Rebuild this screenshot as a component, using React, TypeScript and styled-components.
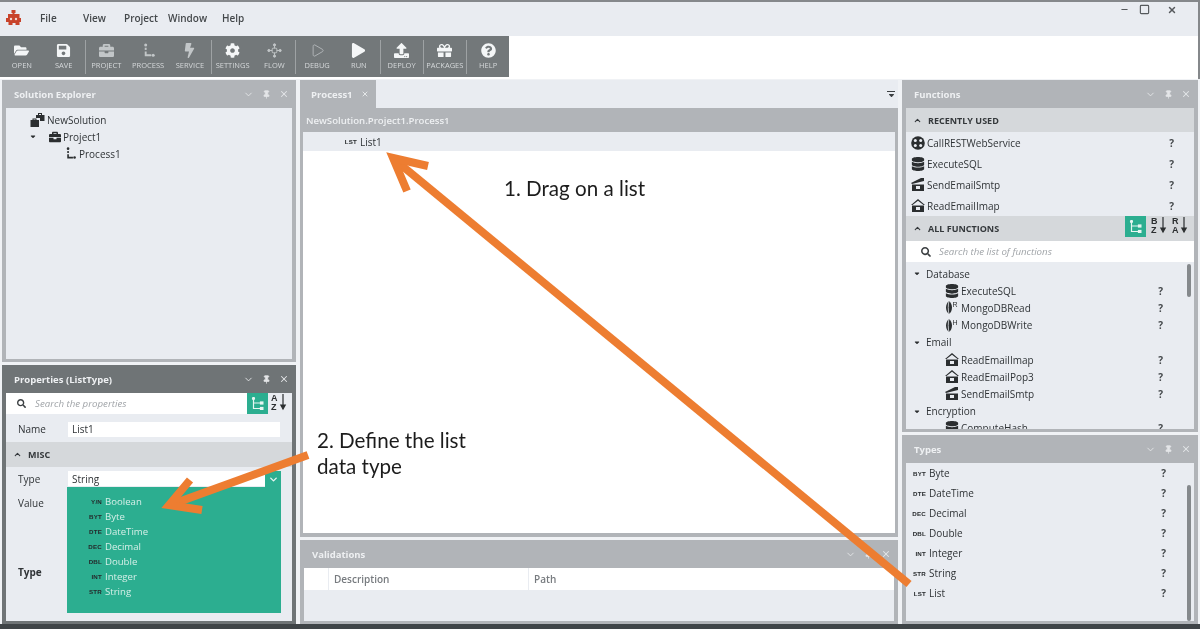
import { Fragment, ReactNode } from "react";
import styled, { createGlobalStyle } from "styled-components";
import { ChevronDown, ChevronUp, Minus, Pin, Play, Square, X } from "lucide-react";
import {
  FaBolt,
  FaBriefcase,
  FaCog,
  FaDatabase,
  FaFolderOpen,
  FaGift,
  FaPlay,
  FaQuestionCircle,
  FaSave,
  FaSearch,
  FaSortDown,
  FaUpload,
} from "react-icons/fa";

const GlobalStyle = createGlobalStyle`
  html, body {
    margin: 0;
    padding: 0;
    background: #ffffff;
    overflow: hidden;
  }
  * { box-sizing: border-box; }
`;

const Shell = styled.div`
  position: relative;
  width: 1200px;
  height: 629px;
  display: flex;
  flex-direction: column;
  overflow: hidden;
  background: #e9ecf1;
  border-top: 2px solid #85888b;
  font-family: "Open Sans", "Noto Sans", sans-serif;
  font-size: 10px;
  color: #2f3336;
  filter: blur(0.3px);
`;

const TitleBar = styled.div`
  height: 34px;
  flex: none;
  display: flex;
  align-items: center;
  padding: 0 0 2px 6px;
  background: #e9ecf1;
  border-right: 2px solid #85888b;
`;

const Logo = styled.svg`
  width: 15px;
  height: 16px;
  margin-right: 19px;
`;

const MenuItem = styled.span<{ $w: number }>`
  width: ${(p) => p.$w}px;
  font-weight: 600;
  font-size: 10px;
  color: #44484b;
`;

const WindowButtons = styled.div`
  margin-left: auto;
  margin-right: 21px;
  align-self: flex-start;
  margin-top: 2px;
  display: flex;
  align-items: center;
  color: #55595c;
  gap: 10px;
`;

const CloseGlyph = styled(X)`
  margin-left: 7px;
`;

const ToolRow = styled.div`
  height: 43px;
  flex: none;
  background: #ffffff;
  border-right: 2px solid #85888b;
`;

const Toolbar = styled.div`
  width: 509px;
  height: 41px;
  padding-left: 1px;
  display: flex;
  background: #73787a;
`;

const ToolSep = styled.div`
  width: 1px;
  margin: 4px 0 3px;
  background: #9ea2a4;
`;

const ToolButton = styled.div<{ $w?: number; $dim?: boolean }>`
  width: ${(p) => p.$w ?? 42}px;
  display: flex;
  flex-direction: column;
  align-items: center;
  padding-top: 7px;
  gap: 3px;
  color: ${(p) => (p.$dim ? "#c2c6c8" : "#f4f6f7")};
  svg {
    height: 15px;
    width: 15px;
    display: block;
  }
`;

const ToolLabel = styled.span`
  font-size: 7.5px;
  line-height: 9px;
  color: #d5d8da;
  white-space: nowrap;
`;

const Workspace = styled.div`
  flex: 1;
  min-height: 0;
  padding: 1px 2px 0;
  display: grid;
  grid-template-columns: 294px 598px 296px;
  gap: 4px;
  background: #f0f2f5;
`;

const Column = styled.div`
  display: flex;
  flex-direction: column;
  gap: 3px;
  min-height: 0;
`;

const Frame = styled.section<{ $h?: number; $dark?: boolean }>`
  ${(p) => (p.$h ? `height: ${p.$h}px; flex: none;` : "flex: 1; min-height: 0;")}
  display: flex;
  flex-direction: column;
  background: ${(p) => (p.$dark ? "#6f7476" : "#b1b4b8")};
  padding: 0 4px 3px;
`;

const FrameHead = styled.header`
  height: 28px;
  flex: none;
  display: flex;
  align-items: center;
  padding: 0 3px 0 8px;
  color: #eef0f2;
  font-weight: 700;
  font-size: 9.5px;
`;

const FrameControls = styled.div`
  margin-left: auto;
  display: flex;
  align-items: center;
  gap: 8px;
  color: #e4e6e8;
`;

const FrameBody = styled.div`
  flex: 1;
  min-height: 0;
  position: relative;
  overflow: hidden;
  background: #e9ecf1;
`;

const TreeList = styled.div`
  padding-top: 3px;
`;

const TreeRow = styled.div<{ $indent: number; $h?: number; $right?: number }>`
  height: ${(p) => p.$h ?? 17.2}px;
  padding-left: ${(p) => p.$indent}px;
  padding-right: ${(p) => p.$right ?? 31}px;
  display: flex;
  align-items: center;
  gap: 2px;
  font-size: 10px;
  white-space: nowrap;
  svg {
    flex: none;
    color: #2b2e30;
  }
`;

const Caret = styled(FaSortDown)`
  width: 8px;
  height: 8px;
  margin: -3px 3px 0 0;
`;

const ProjectCaret = styled(Caret)`
  margin-right: 10px;
`;

const Help = styled.span`
  margin-left: auto;
  font-weight: 700;
  color: #44484b;
`;

const Band = styled.div<{ $h?: number }>`
  height: ${(p) => p.$h ?? 25}px;
  flex: none;
  display: flex;
  align-items: center;
  padding-left: 7px;
  gap: 6px;
  background: #d5d8db;
  font-weight: 700;
  font-size: 9px;
  color: #34383b;
`;

const SearchRow = styled.div<{ $pad: number }>`
  height: 21px;
  display: flex;
  align-items: center;
  gap: 8px;
  padding-left: ${(p) => p.$pad}px;
  background: #ffffff;
  font-style: italic;
  font-size: 9.7px;
  color: #a0a4a8;
  svg {
    color: #3c4043;
  }
`;

const TogglePill = styled.div`
  width: 21px;
  height: 21px;
  flex: none;
  display: flex;
  align-items: center;
  justify-content: center;
  background: #2cae90;
  color: #e8f6f2;
`;

const SortIcon = styled.svg`
  width: 16px;
  height: 18px;
  color: #2b2e30;
`;

const SortTools = styled.div`
  margin-left: auto;
  margin-right: 6px;
  align-self: flex-start;
  display: flex;
  gap: 5px;
`;

const PropSearch = styled.div`
  display: flex;
  height: 21px;
  align-items: stretch;
  gap: 3px;
`;

const PropSearchField = styled(SearchRow)`
  flex: none;
  width: 241px;
  margin-right: -3px;
  gap: 9px;
`;

const PropRow = styled.div<{ $h: number; $top?: number; $right?: number }>`
  height: ${(p) => p.$h}px;
  display: flex;
  align-items: center;
  padding: ${(p) => p.$top ?? 0}px ${(p) => p.$right ?? 12}px 0 12px;
`;

const PropLabel = styled.span`
  width: 50px;
  flex: none;
  font-size: 10px;
`;

const TextField = styled.div`
  flex: 1;
  height: 15px;
  background: #ffffff;
  padding-left: 4px;
  display: flex;
  align-items: center;
  font-size: 10px;
`;

const DropHead = styled.div`
  flex: 1;
  display: flex;
  height: 16px;
  align-items: stretch;
`;

const DropArrow = styled.div`
  width: 16px;
  display: flex;
  align-items: center;
  justify-content: center;
  background: #2cae90;
  color: #e8f6f2;
`;

const ValueArea = styled.div`
  display: flex;
  padding-left: 12px;
  padding-right: 11px;
`;

const ValueLabels = styled.div`
  width: 49px;
  flex: none;
  display: flex;
  flex-direction: column;
  height: 126px;
  padding-top: 9px;
  font-size: 10px;
`;

const TypeCaption = styled.b`
  margin-top: auto;
  margin-bottom: 34px;
  font-size: 10px;
`;

const TypeDropdown = styled.div`
  flex: 1;
  height: 126px;
  background: #2cae90;
  padding: 7px 0 0 20px;
`;

const DropdownItem = styled.div`
  height: 15px;
  display: flex;
  align-items: center;
  gap: 3px;
  color: #d6efe8;
  font-size: 9.6px;
`;

const TypeCode = styled.span`
  width: 15px;
  flex: none;
  text-align: right;
  font-family: "Liberation Sans", sans-serif;
  font-weight: 700;
  font-size: 6.2px;
  letter-spacing: 0.2px;
  color: #25292b;
`;

const TypeRow = styled.div`
  height: 20px;
  display: flex;
  align-items: center;
  gap: 3px;
  padding: 0 28px 0 5px;
  font-size: 10px;
`;

const ScrollThumb = styled.div<{ $top: number; $h: number }>`
  position: absolute;
  right: 3px;
  top: ${(p) => p.$top}px;
  width: 4px;
  height: ${(p) => p.$h}px;
  border-radius: 2px;
  background: #85898c;
`;

const TabStrip = styled.div`
  height: 28px;
  flex: none;
  display: flex;
  align-items: stretch;
  background: #e9ecf1;
`;

const Tab = styled.div`
  width: 76px;
  display: flex;
  align-items: center;
  gap: 8px;
  padding-left: 11px;
  background: #b1b4b8;
  color: #eef0f2;
  font-weight: 700;
  font-size: 9.5px;
`;

const TabMenu = styled.div`
  margin-left: auto;
  width: 14px;
  display: flex;
  flex-direction: column;
  align-items: center;
  justify-content: center;
  color: #3c4043;
`;

const TabMenuBar = styled.div`
  width: 8px;
  height: 1px;
  background: currentColor;
  margin-bottom: 1px;
`;

const TabMenuCaret = styled(FaSortDown)`
  width: 9px;
  height: 9px;
  margin-top: -4px;
`;

const ProcessFrame = styled.section`
  height: 457px;
  flex: none;
  display: flex;
  flex-direction: column;
`;

const ProcessInner = styled.div`
  flex: 1;
  min-height: 0;
  display: flex;
  flex-direction: column;
  background: #b1b4b8;
  padding: 0 3px 4px;
`;

const Breadcrumb = styled.div`
  height: 24px;
  flex: none;
  display: flex;
  align-items: center;
  padding-left: 3px;
  color: #eef0f2;
  font-size: 9.6px;
  font-weight: 600;
`;

const Canvas = styled.div`
  flex: 1;
  background: #ffffff;
`;

const CanvasRow = styled.div`
  height: 19px;
  display: flex;
  align-items: center;
  gap: 3px;
  padding-left: 39px;
  background: #e9ecf1;
  font-size: 10px;
`;

const GridHead = styled.div`
  height: 22px;
  display: grid;
  grid-template-columns: 24px 199px 1fr;
  gap: 1px;
  background: #e9ecf1;
`;

const GridCell = styled.div`
  background: #ffffff;
  display: flex;
  align-items: center;
  padding-left: 5px;
  font-weight: 600;
  font-size: 10px;
  color: #777b7f;
`;

const BottomStrip = styled.div`
  height: 5px;
  flex: none;
  background: #3f4447;
`;

const ArrowLayer = styled.svg`
  position: absolute;
  left: 0;
  top: -2px;
  width: 1200px;
  height: 629px;
  pointer-events: none;
`;

const Callout = styled.div<{ $x: number; $y: number }>`
  position: absolute;
  left: ${(p) => p.$x}px;
  top: ${(p) => p.$y}px;
  font-family: Lato, "Open Sans", sans-serif;
  font-size: 20.6px;
  line-height: 26px;
  color: #1c1c1c;
  white-space: pre;
`;

const ProcessIcon = ({ size = 16 }: { size?: number }) => (
  <svg width={size} height={size} viewBox="0 0 16 16" fill="currentColor">
    <circle cx="5" cy="2" r="1.6" />
    <rect x="4" y="5" width="2" height="2.4" />
    <path d="M4 9h2v3h5v2H4z" />
    <circle cx="13" cy="13" r="1.6" />
  </svg>
);

const FlowIcon = () => (
  <svg viewBox="0 0 16 16" fill="none" stroke="currentColor" strokeWidth="1">
    <path d="M8 3v10M3 8h10" />
    <rect x="5.5" y="5.5" width="5" height="5" rx="1" fill="#73787a" />
    <circle cx="8" cy="2" r="1.2" fill="currentColor" />
    <circle cx="8" cy="14" r="1.2" fill="currentColor" />
    <circle cx="2" cy="8" r="1.2" fill="currentColor" />
    <circle cx="14" cy="8" r="1.2" fill="currentColor" />
  </svg>
);

const TreeToggleIcon = () => (
  <svg width="13" height="13" viewBox="0 0 13 13" fill="none" stroke="currentColor" strokeWidth="1.2">
    <path d="M2.5 1v10.5H11M2.5 6H11" />
    <circle cx="2.5" cy="1.5" r="1" fill="currentColor" />
    <rect x="9.5" y="5" width="2.4" height="2" fill="currentColor" />
    <rect x="9.5" y="10.5" width="2.4" height="2" fill="currentColor" />
  </svg>
);

const SuitcasesIcon = () => (
  <svg width="15" height="14" viewBox="0 0 15 14" fill="currentColor">
    <path d="M6 2h2V0h4v2h2.500v6H10V5H6zM9 1v1h2V1z" />
    <path d="M0.500 7H2.500V5.500H6.500V7H9v7H0.500zM3.500 6.500V7h2v-.5z" />
  </svg>
);

const ReelIcon = () => (
  <svg width="14" height="14" viewBox="0 0 14 14">
    <circle cx="7" cy="7" r="6.8" fill="#2b2e30" />
    <circle cx="4.300" cy="4.500" r="1.500" fill="#e9ecf1" />
    <circle cx="9.700" cy="4.500" r="1.500" fill="#e9ecf1" />
    <circle cx="4.300" cy="9.500" r="1.500" fill="#e9ecf1" />
    <circle cx="9.700" cy="9.500" r="1.500" fill="#e9ecf1" />
  </svg>
);

const MailBoxIcon = ({ open }: { open?: boolean }) => (
  <svg width="14" height="13" viewBox="0 0 14 13" fill="#2b2e30">
    {open ? <path d="M0 6 L7 0 L14 6 L12.500 6 L7 1.800 L1.500 6z" /> : <path d="M0 5 L10 0 L13 0 L13 3 L1 6z" />}
    <path d="M1 6.500h12V13H1z" />
    <rect x="5" y="8" width="4" height="3" fill="#e9ecf1" />
  </svg>
);

const LeafIcon = ({ mark }: { mark: string }) => (
  <svg width="14" height="13" viewBox="0 0 14 13">
    <path d="M4 0C0 3 0 10 4 13C8 10 8 3 4 0z" fill="#2b2e30" />
    <path d="M4 0C3 3 3 10 4 13" stroke="#e9ecf1" strokeWidth="0.8" fill="none" />
    <text x="7.500" y="6" fontSize="7" fontFamily="Liberation Sans" fill="#2b2e30">
      {mark}
    </text>
  </svg>
);

const SortGlyph = ({ top, bottom }: { top: string; bottom: string }) => (
  <SortIcon viewBox="0 0 16 18" fill="currentColor">
    <text x="0" y="8" fontSize="9" fontWeight="700" fontFamily="Liberation Sans">
      {top}
    </text>
    <text x="0" y="17" fontSize="9" fontWeight="700" fontFamily="Liberation Sans">
      {bottom}
    </text>
    <path d="M12 1v13M9.800 12l2.200 4 2.200-4z" stroke="currentColor" strokeWidth="1.200" />
  </SortIcon>
);

const Controls = () => (
  <FrameControls>
    <ChevronDown size={11} />
    <Pin size={9} fill="currentColor" />
    <X size={10} strokeWidth={2.500} />
  </FrameControls>
);

const Panel = ({
  title,
  dark,
  h,
  children,
}: {
  title: string;
  dark?: boolean;
  h?: number;
  children: ReactNode;
}) => (
  <Frame $dark={dark} $h={h}>
    <FrameHead>
      {title}
      <Controls />
    </FrameHead>
    <FrameBody>{children}</FrameBody>
  </Frame>
);

const tools: { key: string; label: string; icon: ReactNode; dim?: boolean; w?: number }[][] = [
  [
    { key: "o", label: "OPEN", icon: <FaFolderOpen /> },
    { key: "s", label: "SAVE", icon: <FaSave /> },
  ],
  [
    { key: "pj", label: "PROJECT", icon: <FaBriefcase />, dim: true },
    { key: "pc", label: "PROCESS", icon: <ProcessIcon />, dim: true },
    { key: "sv", label: "SERVICE", icon: <FaBolt />, dim: true },
  ],
  [
    { key: "st", label: "SETTINGS", icon: <FaCog /> },
    { key: "fl", label: "FLOW", icon: <FlowIcon />, dim: true },
  ],
  [
    { key: "db", label: "DEBUG", icon: <Play strokeWidth={1.200} />, dim: true },
    { key: "rn", label: "RUN", icon: <FaPlay /> },
  ],
  [{ key: "dp", label: "DEPLOY", icon: <FaUpload /> }],
  [{ key: "pk", label: "PACKAGES", icon: <FaGift />, w: 43 }],
  [{ key: "hl", label: "HELP", icon: <FaQuestionCircle /> }],
];

const dropdownTypes = [
  ["Y/N", "Boolean"],
  ["BYT", "Byte"],
  ["DTE", "DateTime"],
  ["DEC", "Decimal"],
  ["DBL", "Double"],
  ["INT", "Integer"],
  ["STR", "String"],
];

const panelTypes = [
  ["BYT", "Byte"],
  ["DTE", "DateTime"],
  ["DEC", "Decimal"],
  ["DBL", "Double"],
  ["INT", "Integer"],
  ["STR", "String"],
  ["LST", "List"],
];

const App = () => {
  return (
    <Shell>
      <GlobalStyle />
      <TitleBar>
        <Logo viewBox="0 0 15 16" fill="#c8432b">
          <path d="M5.500 0h4v3h-1v1h5v4h2v4h-2v3h-4v-2h-3v2h-4v-3H0V8h2V4h4.500V3h-1z" />
          <circle cx="5" cy="9" r="1.200" fill="#f2d9d2" />
          <circle cx="10" cy="9" r="1.200" fill="#f2d9d2" />
        </Logo>
        <MenuItem $w={43}>File</MenuItem>
        <MenuItem $w={41}>View</MenuItem>
        <MenuItem $w={44}>Project</MenuItem>
        <MenuItem $w={54}>Window</MenuItem>
        <MenuItem $w={30}>Help</MenuItem>
        <WindowButtons>
          <Minus size={9} strokeWidth={3} />
          <Square size={11} strokeWidth={2.500} />
          <CloseGlyph size={10} strokeWidth={3.500} />
        </WindowButtons>
      </TitleBar>
      <ToolRow>
        <Toolbar>
          {tools.map((group, i) => (
            <Fragment key={i}>
              {i > 0 && <ToolSep />}
              {group.map((t) => (
                <ToolButton key={t.key} $dim={t.dim} $w={t.w}>
                  {t.icon}
                  <ToolLabel>{t.label}</ToolLabel>
                </ToolButton>
              ))}
            </Fragment>
          ))}
        </Toolbar>
      </ToolRow>
      <Workspace>
        <Column>
          <Panel title="Solution Explorer" h={282}>
            <TreeList>
              <TreeRow $indent={24}>
                <SuitcasesIcon />
                NewSolution
              </TreeRow>
              <TreeRow $indent={23}>
                <ProjectCaret />
                <FaBriefcase size={12} />
                Project1
              </TreeRow>
              <TreeRow $indent={58}>
                <ProcessIcon size={13} />
                Process1
              </TreeRow>
            </TreeList>
          </Panel>
          <Panel title="Properties (ListType)" dark>
            <PropSearch>
              <PropSearchField $pad={11}>
                <FaSearch size={9} />
                Search the properties
              </PropSearchField>
              <TogglePill>
                <TreeToggleIcon />
              </TogglePill>
              <SortGlyph top="A" bottom="Z" />
            </PropSearch>
            <PropRow $h={28} $top={2}>
              <PropLabel>Name</PropLabel>
              <TextField>List1</TextField>
            </PropRow>
            <Band>
              <ChevronUp size={9} strokeWidth={3} />
              MISC
            </Band>
            <PropRow $h={20} $top={4} $right={11}>
              <PropLabel>Type</PropLabel>
              <DropHead>
                <TextField>String</TextField>
                <DropArrow>
                  <ChevronDown size={11} strokeWidth={3} />
                </DropArrow>
              </DropHead>
            </PropRow>
            <ValueArea>
              <ValueLabels>
                Value
                <TypeCaption>Type</TypeCaption>
              </ValueLabels>
              <TypeDropdown>
                {dropdownTypes.map(([code, name]) => (
                  <DropdownItem key={name}>
                    <TypeCode>{code}</TypeCode>
                    {name}
                  </DropdownItem>
                ))}
              </TypeDropdown>
            </ValueArea>
          </Panel>
        </Column>

        <Column>
          <ProcessFrame>
            <TabStrip>
              <Tab>
                Process1
                <X size={8} strokeWidth={2.500} />
              </Tab>
              <TabMenu>
                <TabMenuBar />
                <TabMenuCaret />
              </TabMenu>
            </TabStrip>
            <ProcessInner>
              <Breadcrumb>NewSolution.Project1.Process1</Breadcrumb>
              <Canvas>
                <CanvasRow>
                  <TypeCode>LST</TypeCode>
                  List1
                </CanvasRow>
              </Canvas>
            </ProcessInner>
          </ProcessFrame>
          <Panel title="Validations">
            <GridHead>
              <GridCell />
              <GridCell>Description</GridCell>
              <GridCell>Path</GridCell>
            </GridHead>
          </Panel>
        </Column>

        <Column>
          <Panel title="Functions" h={352}>
            <Band $h={24}>
              <ChevronUp size={9} strokeWidth={3} />
              RECENTLY USED
            </Band>
            <TreeRow $indent={5} $h={21} $right={20}>
              <ReelIcon />
              CallRESTWebService
              <Help>?</Help>
            </TreeRow>
            <TreeRow $indent={5} $h={21} $right={20}>
              <FaDatabase size={14} />
              ExecuteSQL
              <Help>?</Help>
            </TreeRow>
            <TreeRow $indent={5} $h={21} $right={20}>
              <MailBoxIcon />
              SendEmailSmtp
              <Help>?</Help>
            </TreeRow>
            <TreeRow $indent={5} $h={21} $right={20}>
              <MailBoxIcon open />
              ReadEmailImap
              <Help>?</Help>
            </TreeRow>
            <Band>
              <ChevronUp size={9} strokeWidth={3} />
              ALL FUNCTIONS
              <SortTools>
                <TogglePill>
                  <TreeToggleIcon />
                </TogglePill>
                <SortGlyph top="B" bottom="Z" />
                <SortGlyph top="R" bottom="A" />
              </SortTools>
            </Band>
            <SearchRow $pad={15}>
              <FaSearch size={10} />
              Search the list of functions
            </SearchRow>
            <TreeList>
              <TreeRow $indent={7}>
                <Caret />
                Database
              </TreeRow>
              <TreeRow $indent={39}>
                <FaDatabase size={14} />
                ExecuteSQL
                <Help>?</Help>
              </TreeRow>
              <TreeRow $indent={39}>
                <LeafIcon mark="R" />
                MongoDBRead
                <Help>?</Help>
              </TreeRow>
              <TreeRow $indent={39}>
                <LeafIcon mark="H" />
                MongoDBWrite
                <Help>?</Help>
              </TreeRow>
              <TreeRow $indent={7}>
                <Caret />
                Email
              </TreeRow>
              <TreeRow $indent={39}>
                <MailBoxIcon open />
                ReadEmailImap
                <Help>?</Help>
              </TreeRow>
              <TreeRow $indent={39}>
                <MailBoxIcon open />
                ReadEmailPop3
                <Help>?</Help>
              </TreeRow>
              <TreeRow $indent={39}>
                <MailBoxIcon />
                SendEmailSmtp
                <Help>?</Help>
              </TreeRow>
              <TreeRow $indent={7}>
                <Caret />
                Encryption
              </TreeRow>
              <TreeRow $indent={39}>
                <FaDatabase size={14} />
                ComputeHash
                <Help>?</Help>
              </TreeRow>
            </TreeList>
            <ScrollThumb $top={156} $h={33} />
          </Panel>
          <Panel title="Types">
            {panelTypes.map(([code, name]) => (
              <TypeRow key={name}>
                <TypeCode>{code}</TypeCode>
                {name}
                <Help>?</Help>
              </TypeRow>
            ))}
            <ScrollThumb $top={22} $h={136} />
          </Panel>
        </Column>
      </Workspace>
      <BottomStrip />

      <ArrowLayer viewBox="0 0 1200 629" fill="none" stroke="#ed7d31" strokeWidth="8">
        <path d="M909 584 L395 160" />
        <path d="M428 166 L393 158 L407 191" />
        <path d="M308 455 L170 505" />
        <path d="M190 480 L169 505 L202 510" />
      </ArrowLayer>
      <Callout $x={504} $y={173}>
        1. Drag on a list
      </Callout>
      <Callout $x={317} $y={425}>
        {"2. Define the list\ndata type"}
      </Callout>
    </Shell>
  );
};

export default App;
